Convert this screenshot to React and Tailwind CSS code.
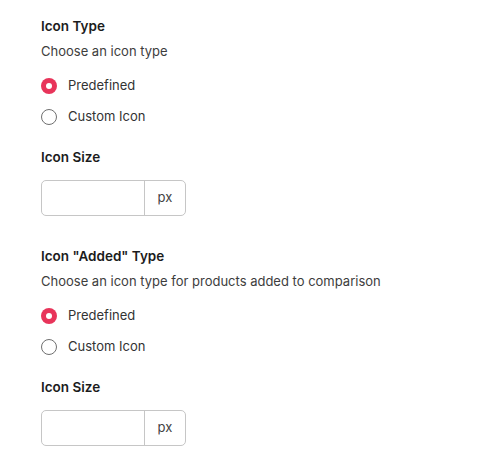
import { useState } from 'react';

const Radio = ({ checked, label, onClick }) => (
  <button type="button" onClick={onClick} className="flex items-center h-6 gap-[11px] text-left">
    {checked ? (
      <span className="w-4 h-4 rounded-full bg-[#e8345a] flex items-center justify-center">
        <span className="w-[6px] h-[6px] rounded-full bg-white" />
      </span>
    ) : (
      <span className="w-4 h-4 rounded-full border border-[#6f6f6f] bg-white" />
    )}
    <span className="text-[13px] text-[#333333]">{label}</span>
  </button>
);

const SizeInput = () => (
  <div className="flex w-[145px] h-9 border border-[#c6c6c6] rounded-[5px] overflow-hidden">
    <input className="w-[102px] h-full px-2 outline-none text-[13px] text-[#333]" />
    <div className="flex-1 border-l border-[#c6c6c6] flex items-center justify-center text-[13px] text-[#444]">px</div>
  </div>
);

const Section = ({ title, hint }) => {
  const [type, setType] = useState('predefined');
  return (
    <div>
      <div className="text-[13.5px] leading-5 font-semibold text-[#1c1c1c]">{title}</div>
      <div className="mt-[5px] text-[13px] leading-5 text-[#3d3d3d]">{hint}</div>
      <div className="mt-[13px] flex flex-col gap-[7px]">
        <Radio checked={type === 'predefined'} label="Predefined" onClick={() => setType('predefined')} />
        <Radio checked={type === 'custom'} label="Custom Icon" onClick={() => setType('custom')} />
      </div>
      <div className="mt-[18px] text-[13.5px] leading-5 font-semibold text-[#1c1c1c]">Icon Size</div>
      <div className="mt-[13px]">
        <SizeInput />
      </div>
    </div>
  );
};

export default function App() {
  return (
    <div className="min-h-screen bg-white pl-[41px] pt-4 flex flex-col gap-[30px]" style={{ fontFamily: 'Inter, "Noto Sans", sans-serif' }}>
      <Section title="Icon Type" hint="Choose an icon type" />
      <Section title={'Icon "Added" Type'} hint="Choose an icon type for products added to comparison" />
    </div>
  );
}
